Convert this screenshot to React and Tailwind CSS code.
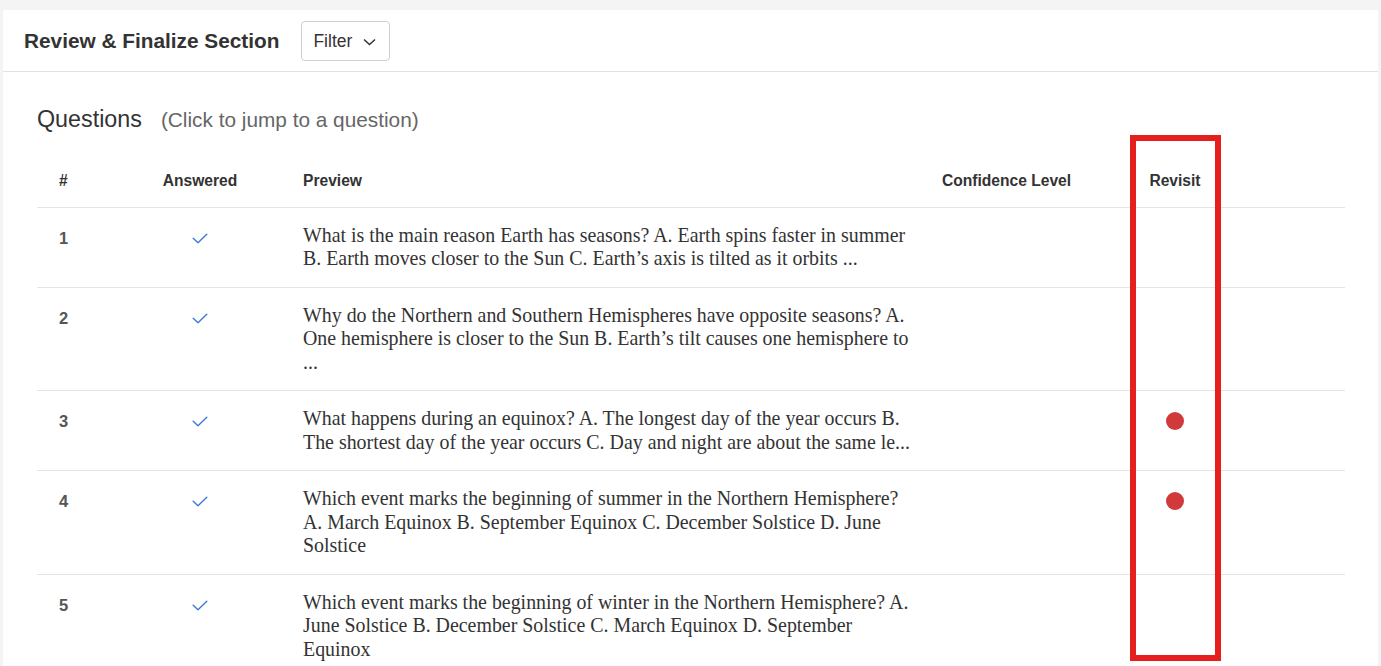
import React from 'react';

const rows = [
  {
    n: 1,
    text: 'What is the main reason Earth has seasons? A. Earth spins faster in summer B. Earth moves closer to the Sun C. Earth\u2019s axis is tilted as it orbits ...',
    revisit: false,
  },
  {
    n: 2,
    text: 'Why do the Northern and Southern Hemispheres have opposite seasons? A. One hemisphere is closer to the Sun B. Earth\u2019s tilt causes one hemisphere to ...',
    revisit: false,
  },
  {
    n: 3,
    text: 'What happens during an equinox? A. The longest day of the year occurs B. The shortest day of the year occurs C. Day and night are about the same le...',
    revisit: true,
  },
  {
    n: 4,
    text: 'Which event marks the beginning of summer in the Northern Hemisphere? A. March Equinox B. September Equinox C. December Solstice D. June Solstice',
    revisit: true,
  },
  {
    n: 5,
    text: 'Which event marks the beginning of winter in the Northern Hemisphere? A. June Solstice B. December Solstice C. March Equinox D. September Equinox',
    revisit: false,
  },
];

const cols = 'grid grid-cols-[103px_120px_660px_200px_110px_1fr]';

const Check = () => (
  <svg width="16" height="11" viewBox="0 0 16 11" fill="none">
    <path d="M1.2 5.2 L6 9.8 L14.8 1.2" stroke="#3b7bd4" strokeWidth="1.4" strokeLinecap="round" strokeLinejoin="round" />
  </svg>
);

const App = () => {
  return (
    <div className="h-[666px] overflow-hidden bg-[#f4f4f4] pt-[10px] pl-[3px] pr-[3px] font-[family-name:Liberation_Sans,Arial,sans-serif] relative">
      <div className="bg-white h-full">
        <div className="h-[62px] flex items-center pl-[21px] border-b border-[#e2e2e2]">
          <h1 className="text-[20.8px] font-bold text-[#333]">Review &amp; Finalize Section</h1>
          <button className="ml-[22px] h-[40px] w-[89px] border border-[#cfcfcf] rounded-[4px] flex items-center pl-[11px] pt-[2px] text-[17.5px] text-[#333]">
            Filter
            <svg className="ml-[11px]" width="13" height="8" viewBox="0 0 13 8" fill="none">
              <path d="M1 1.5 L6.5 6.5 L12 1.5" stroke="#333" strokeWidth="1.5" />
            </svg>
          </button>
        </div>

        <div className="pl-[34px] pr-[33px]">
          <div className="flex items-baseline pt-[30px]">
            <span className="text-[23.3px] text-[#333]">Questions</span>
            <span className="ml-[19px] text-[20.8px] text-[#666]">(Click to jump to a question)</span>
          </div>

          <div className={`${cols} h-[56px] mt-[15px] pt-[3px] items-center border-b border-[#e4e4e4] text-[15.6px] font-bold text-[#333]`}>
            <div className="pl-[22px]">#</div>
            <div className="text-center">Answered</div>
            <div className="pl-[43px]">Preview</div>
            <div className="pl-[22px]">Confidence Level</div>
            <div className="text-center">Revisit</div>
            <div></div>
          </div>

          {rows.map((r) => (
            <div key={r.n} className={`${cols} border-b border-[#e4e4e4] py-[16px]`}>
              <div className="pl-[22px] text-[16.5px] font-bold text-[#555] leading-[24px] pt-[2px]">{r.n}</div>
              <div className="flex justify-center pt-[9px]">
                <Check />
              </div>
              <div className="pl-[43px] pr-[5px] font-[family-name:Liberation_Serif,Times_New_Roman,serif] text-[19.9px] leading-[23.5px] text-[#333]">
                {r.text}
              </div>
              <div></div>
              <div className="flex justify-center pt-[5px]">
                {r.revisit && <span className="block w-[18px] h-[18px] rounded-full bg-[#d03a3a]"></span>}
              </div>
              <div></div>
            </div>
          ))}
        </div>
      </div>

      <div className="absolute left-[1130px] top-[135px] w-[91px] h-[526px] border-[6px] border-[#e51e1e] pointer-events-none"></div>
    </div>
  );
};

export default App;
